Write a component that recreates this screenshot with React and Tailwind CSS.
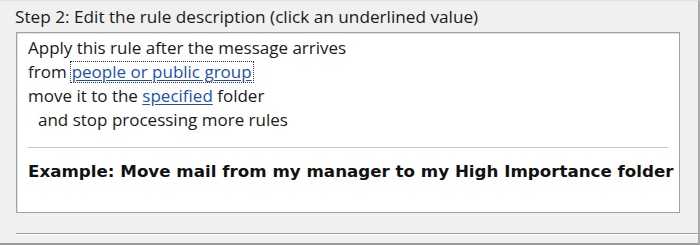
export default function App() {
  return (
    <div className="w-[700px] h-[245px] bg-[#f0f0f0] border-t border-t-[#e2e2e2] border-r-2 border-r-[#a8a8a8] border-b-2 border-b-[#9a9a9a] flex flex-col overflow-hidden" style={{ fontFamily: '"Open Sans", sans-serif' }}>
      <div className="pl-[15px] pt-[5px] h-[31px] text-[17.2px] leading-[22px] text-[#1a1a1a] whitespace-nowrap">
        Step 2: Edit the rule description (click an underlined value)
      </div>
      <div className="ml-[16px] mr-[18px] h-[181px] bg-white border border-[#a0a0a0] shadow-[inset_1px_1px_0_#e3e3e3] flex flex-col pl-[11px] pr-[10px] pt-[3px] text-[17px] text-[#1a1a1a] whitespace-nowrap">
        <div className="h-[24px] leading-[24px]">Apply this rule after the message arrives</div>
        <div className="h-[24px] leading-[24px] flex items-center">
          <span>from</span>
          <span className="ml-[3px] border border-dotted border-[#333] leading-[20px] px-[1px] text-[#2350b0] underline underline-offset-2">people or public group</span>
        </div>
        <div className="h-[24px] leading-[24px]">
          move it to the <span className="text-[#2350b0] underline underline-offset-2">specified</span> folder
        </div>
        <div className="h-[24px] leading-[24px] pl-[10px]">and stop processing more rules</div>
        <div className="mt-[15px] h-px bg-[#c8c8c8] mr-[1px]" />
        <div className="mt-[13px] text-[16.7px] font-bold leading-[20px] text-[#111]" style={{ fontFamily: '"DejaVu Sans", sans-serif' }}>
          Example: Move mail from my manager to my High Importance folder
        </div>
      </div>
      <div className="mt-[20px] ml-[16px] h-[2px] border-t border-t-[#a0a0a0] border-b border-b-white" />
    </div>
  );
}
